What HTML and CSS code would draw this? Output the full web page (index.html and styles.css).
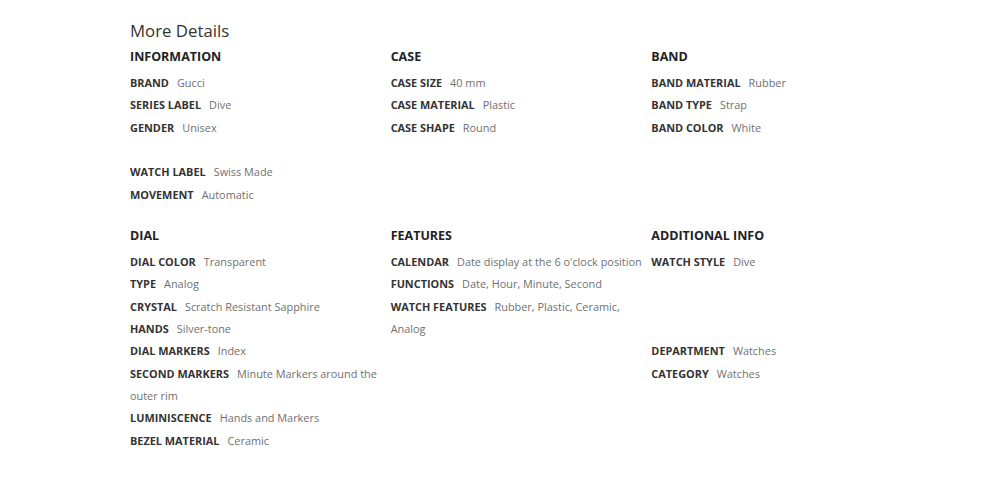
FILE: index.html
```html
<!DOCTYPE html>
<html lang="en">
<head>
<meta charset="utf-8">
<title>More Details</title>
<link rel="stylesheet" href="styles.css">
</head>
<body>
<div class="details">
  <h2 class="title">More Details</h2>
  <div class="grid">
    <section class="group">
      <h3 class="group-head">INFORMATION</h3>
      <div class="row"><span class="label">BRAND</span><span class="value">Gucci</span></div>
      <div class="row"><span class="label">SERIES LABEL</span><span class="value">Dive</span></div>
      <div class="row"><span class="label">GENDER</span><span class="value">Unisex</span></div>
      <div class="row empty"></div>
      <div class="row"><span class="label">WATCH LABEL</span><span class="value">Swiss Made</span></div>
      <div class="row"><span class="label">MOVEMENT</span><span class="value">Automatic</span></div>
    </section>
    <section class="group">
      <h3 class="group-head">CASE</h3>
      <div class="row"><span class="label">CASE SIZE</span><span class="value">40 mm</span></div>
      <div class="row"><span class="label">CASE MATERIAL</span><span class="value">Plastic</span></div>
      <div class="row"><span class="label">CASE SHAPE</span><span class="value">Round</span></div>
    </section>
    <section class="group">
      <h3 class="group-head">BAND</h3>
      <div class="row"><span class="label">BAND MATERIAL</span><span class="value">Rubber</span></div>
      <div class="row"><span class="label">BAND TYPE</span><span class="value">Strap</span></div>
      <div class="row"><span class="label">BAND COLOR</span><span class="value">White</span></div>
    </section>
    <section class="group">
      <h3 class="group-head">DIAL</h3>
      <div class="row"><span class="label">DIAL COLOR</span><span class="value">Transparent</span></div>
      <div class="row"><span class="label">TYPE</span><span class="value">Analog</span></div>
      <div class="row"><span class="label">CRYSTAL</span><span class="value">Scratch Resistant Sapphire</span></div>
      <div class="row"><span class="label">HANDS</span><span class="value">Silver-tone</span></div>
      <div class="row"><span class="label">DIAL MARKERS</span><span class="value">Index</span></div>
      <div class="row"><span class="label">SECOND MARKERS</span><span class="value">Minute Markers around the outer rim</span></div>
      <div class="row"><span class="label">LUMINISCENCE</span><span class="value">Hands and Markers</span></div>
      <div class="row"><span class="label">BEZEL MATERIAL</span><span class="value">Ceramic</span></div>
    </section>
    <section class="group">
      <h3 class="group-head">FEATURES</h3>
      <div class="row"><span class="label">CALENDAR</span><span class="value">Date display at the 6 o'clock position</span></div>
      <div class="row"><span class="label">FUNCTIONS</span><span class="value">Date, Hour, Minute, Second</span></div>
      <div class="row"><span class="label">WATCH FEATURES</span><span class="value">Rubber, Plastic, Ceramic, Analog</span></div>
    </section>
    <section class="group">
      <h3 class="group-head">ADDITIONAL INFO</h3>
      <div class="row"><span class="label">WATCH STYLE</span><span class="value">Dive</span></div>
      <div class="row empty"></div>
      <div class="row empty"></div>
      <div class="row empty"></div>
      <div class="row"><span class="label">DEPARTMENT</span><span class="value">Watches</span></div>
      <div class="row"><span class="label">CATEGORY</span><span class="value">Watches</span></div>
    </section>
  </div>
</div>
</body>
</html>
```

FILE: styles.css
```css
html, body {
  margin: 0;
  padding: 0;
  background: #ffffff;
}

body {
  font-family: "Open Sans", "Noto Sans", "Liberation Sans", sans-serif;
  color: #333333;
}

.details {
  width: 782px;
  margin-left: 130px;
  padding-top: 19px;
}

.title {
  margin: 0;
  font-size: 16.8px;
  font-weight: 400;
  line-height: 24px;
  color: #333333;
}

.grid {
  display: grid;
  grid-template-columns: repeat(3, 1fr);
  row-gap: 19px;
  margin-top: 3px;
}

.group-head {
  margin: 0 0 4px 0;
  font-size: 12.5px;
  font-weight: 700;
  line-height: 22px;
  color: #222222;
}

.row {
  font-size: 10.9px;
  line-height: 22.35px;
  min-height: 22.35px;
  padding-right: 4px;
}

.label {
  font-weight: 700;
  color: #333333;
  margin-right: 8px;
}

.value {
  color: #707070;
}
```
